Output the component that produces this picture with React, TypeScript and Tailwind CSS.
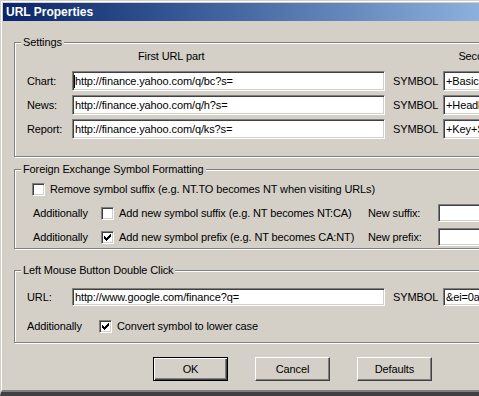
import React from "react";

const sunken =
  "border border-t-[#808080] border-l-[#808080] border-b-white border-r-white shadow-[inset_1px_1px_0_#404040,inset_-1px_-1px_0_#d4d0c8] bg-white";

const Field: React.FC<{ value?: string; className?: string; caret?: boolean }> = ({ value, className, caret }) => (
  <div className={`${sunken} flex shrink-0 items-center overflow-hidden whitespace-nowrap p-[1px] ${className ?? ""}`}>
    {caret ? <span className="h-[13px] w-[1px] shrink-0 bg-black" /> : <span className="w-[1px] shrink-0" />}
    <span className="leading-[13px]">{value}</span>
  </div>
);

const Check: React.FC<{ checked?: boolean }> = ({ checked }) => (
  <div className={`${sunken} flex h-[13px] w-[13px] shrink-0 items-center justify-center`}>
    {checked && (
      <svg width="7" height="7" viewBox="0 0 7 7">
        <path d="M0 2h1v1h1v1h1v-1h1v-1h1v-1h1v-1h1v3h-1v1h-1v1h-1v1h-1v1h-1v-1h-1v-1h-1v-1h-1z" fill="#000" />
      </svg>
    )}
  </div>
);

const Group: React.FC<{ title: string; className?: string; children: React.ReactNode }> = ({ title, className, children }) => (
  <div className={`border border-[#808080] shadow-[inset_1px_1px_0_#fff,1px_1px_0_#fff] ${className ?? ""}`}>
    <div className="-mt-[7px] ml-[6px] w-fit bg-[#d4d0c8] px-[2px] leading-[13px]">{title}</div>
    {children}
  </div>
);

const Button: React.FC<{ label: string; isDefault?: boolean }> = ({ label, isDefault }) => (
  <button
    className={
      isDefault
        ? "h-[24px] w-[75px] border border-black bg-[#d4d0c8] shadow-[inset_1px_1px_0_#fff,inset_-1px_-1px_0_#404040,inset_-2px_-2px_0_#808080]"
        : "h-[24px] w-[75px] border border-t-white border-l-white border-b-[#404040] border-r-[#404040] bg-[#d4d0c8] shadow-[inset_-1px_-1px_0_#808080]"
    }
  >
    {label}
  </button>
);

const urlRows = [
  { label: "Chart:", first: "http://finance.yahoo.com/q/bc?s=", second: "+Basic+Chart", caret: true },
  { label: "News:", first: "http://finance.yahoo.com/q/h?s=", second: "+Headlines" },
  { label: "Report:", first: "http://finance.yahoo.com/q/ks?s=", second: "+Key+Statistics" },
];

export default function App() {
  return (
    <div className="h-[396px] w-[479px] overflow-hidden bg-[#d4d0c8] font-['Liberation_Sans',Arial,sans-serif] text-[11px] tracking-[-0.12px] text-black">
      <div className="h-[396px] w-[560px] border-b-[4px] border-l border-t border-b-[#404040] border-l-[#d4d0c8] border-t-[#d4d0c8]">
        <div className="h-full border-b-[2px] border-l border-t border-b-[#808080] border-l-white border-t-white p-[1px]">
          {/* title bar */}
          <div className="flex h-[18px] items-center bg-gradient-to-r from-[#0a246a] to-[#a6caf0] pl-[3px] text-[12px] font-bold tracking-normal text-white">
            URL Properties
          </div>

          {/* Settings */}
          <Group title="Settings" className="ml-[11px] mr-[11px] mt-[21px] pb-[17px]">
            <div className="mt-[1px] flex h-[13px] leading-[13px]">
              <span className="ml-[123px]">First URL part</span>
              <span className="ml-[254px]">Second URL part</span>
            </div>
            <div className="mt-[8px] flex flex-col gap-[4px] pl-[12px]">
              {urlRows.map((r) => (
                <div key={r.label} className="flex h-[20px] items-center">
                  <span className="w-[45px]">{r.label}</span>
                  <Field className="h-[20px] w-[313px]" value={r.first} caret={r.caret} />
                  <span className="ml-[8px] w-[50px]">SYMBOL</span>
                  <Field className="h-[20px] w-[100px]" value={r.second} />
                </div>
              ))}
            </div>
          </Group>

          {/* Foreign exchange */}
          <Group title="Foreign Exchange Symbol Formatting" className="ml-[11px] mr-[11px] mt-[12px] pb-[1px]">
            <div className="mt-[3px] flex flex-col gap-[4px]">
              <div className="flex h-[20px] items-center pl-[17px]">
                <Check />
                <span className="ml-[5px]">Remove symbol suffix (e.g. NT.TO becomes NT when visiting URLs)</span>
              </div>
              <div className="flex h-[20px] items-center pl-[18px]">
                <span className="w-[68px]">Additionally</span>
                <Check />
                <span className="ml-[5px] w-[249px]">Add new symbol suffix (e.g. NT becomes NT:CA)</span>
                <span className="w-[70px]">New suffix:</span>
                <Field className="h-[18px] w-[100px]" />
              </div>
              <div className="flex h-[20px] items-center pl-[18px]">
                <span className="w-[68px]">Additionally</span>
                <Check checked />
                <span className="ml-[5px] w-[249px]">Add new symbol prefix (e.g. NT becomes CA:NT)</span>
                <span className="w-[70px]">New prefix:</span>
                <Field className="h-[18px] w-[100px]" />
              </div>
            </div>
          </Group>

          {/* Double click */}
          <Group title="Left Mouse Button Double Click" className="ml-[11px] mr-[11px] mt-[21px] pb-[6px]">
            <div className="mt-[10px] flex h-[20px] items-center pl-[12px]">
              <span className="w-[45px]">URL:</span>
              <Field className="h-[18px] w-[313px]" value="http://www.google.com/finance?q=" />
              <span className="ml-[8px] w-[50px]">SYMBOL</span>
              <Field className="h-[18px] w-[100px]" value="&ei=0aXPSLCDDYKU8AS6hqm6CA" />
            </div>
            <div className="mt-[9px] flex h-[20px] items-center pl-[12px]">
              <span className="w-[72px]">Additionally</span>
              <Check checked />
              <span className="ml-[5px]">Convert symbol to lower case</span>
            </div>
          </Group>

          {/* buttons */}
          <div className="mt-[14px] flex gap-[27px] pl-[150px]">
            <Button label="OK" isDefault />
            <Button label="Cancel" />
            <Button label="Defaults" />
          </div>
        </div>
      </div>
    </div>
  );
}
